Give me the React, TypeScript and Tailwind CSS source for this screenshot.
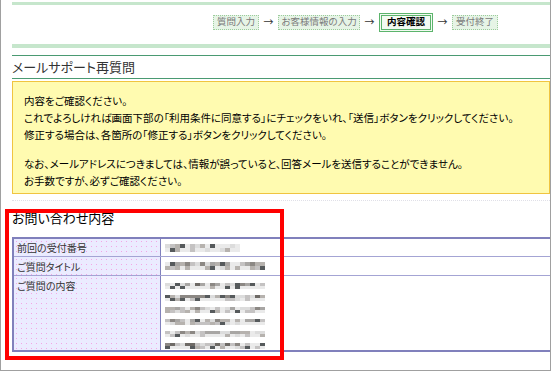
import React from "react"

const jp = "font-['Noto_Sans_CJK_JP','Noto_Sans',sans-serif] [font-feature-settings:'palt']"

const steps = [
  { label: "質問入力", current: false, w: "w-[46px]" },
  { label: "お客様情報の入力", current: false, w: "w-[82px]" },
  { label: "内容確認", current: true, w: "w-[54px]" },
  { label: "受付終了", current: false, w: "w-[46px]" },
]

const shades = [
  "bg-[#6e6a66]",
  "bg-[#8c8884]",
  "bg-[#a8a6a4]",
  "bg-[#c4c2c2]",
  "bg-[#dcdcdc]",
  "bg-[#565a5c]",
  "bg-[#b6b2ae]",
  "bg-[#eaeaea]",
]

// small pseudo random so the mosaic stays the same between renders
function pick(seed: number) {
  const x = Math.sin(seed * 12.9898) * 43758.5453
  return Math.floor((x - Math.floor(x)) * shades.length)
}

function Mosaic({ width, seed, light = false, row = 4 }: { width: number; seed: number; light?: boolean; row?: number }) {
  const cols = Math.round(width / 5)
  return (
    <div className="flex flex-col">
      {[0, 1].map((r) => (
        <div key={r} className="flex">
          {Array.from({ length: cols }).map((_, c) => {
            let i = pick(seed * 97 + r * 31 + c)
            if (light || r === 1) i = Math.min(7, i + 3)
            return <div key={c} className={`w-[5px] ${row === 3 ? "h-[3px]" : "h-[4px]"} ${shades[i]}`} />
          })}
        </div>
      ))}
    </div>
  )
}

export default function App() {
  return (
    <div className={`relative w-[551px] h-[371px] overflow-hidden bg-white border-l border-r border-b border-[#a0a0a0] text-[#222] ${jp}`}>
      <div className="pl-[11px]">
        {/* top band */}
        <div className="mt-[2px] h-[3px] bg-[#c6e6cc]" />

        {/* steps */}
        <div className="h-[39px] pb-[5px] pr-[52px] flex items-center justify-end gap-[4px]">
          {steps.map((s, i) => (
            <React.Fragment key={s.label}>
              {i > 0 && <span className="w-[11px] text-center text-[10px] text-[#333] leading-none">→</span>}
              {s.current ? (
                <div className={`${s.w} h-[19px] flex items-center justify-center border-[3px] border-double border-[#5cb46c] bg-[#f2faf2] text-[9.5px] font-bold text-black leading-none`}>
                  {s.label}
                </div>
              ) : (
                <div className={`${s.w} h-[15px] flex items-center justify-center border border-dotted border-[#9ccc9c] bg-[#e6f4e6] text-[9.5px] text-[#7a7a7a] leading-none`}>
                  {s.label}
                </div>
              )}
            </React.Fragment>
          ))}
        </div>

        {/* lower band */}
        <div className="h-[4px] bg-[#c6e6cc]" />

        {/* title */}
        <div className="mt-[7px] h-[24px] flex items-center border-t border-b border-[#4a9a72] text-[13px] text-[#333]">
          メールサポート再質問
        </div>

        {/* notice */}
        <div className="mt-[2px] h-[113px] border border-[#f0c440] bg-[#fffbb0] pl-[11px] pt-[10px] text-[10.5px] leading-[17px] text-black whitespace-nowrap">
          <p>内容をご確認ください。</p>
          <p>これでよろしければ画面下部の「利用条件に同意する」にチェックをいれ、「送信」ボタンをクリックしてください。</p>
          <p>修正する場合は、各箇所の「修正する」ボタンをクリックしてください。</p>
          <p className="mt-[12px]">なお、メールアドレスにつきましては、情報が誤っていると、回答メールを送信することができません。</p>
          <p>お手数ですが、必ずご確認ください。</p>
        </div>

        <div className="mt-[6px] border-t border-dotted border-[#e0e0e8]" />

        {/* inquiry */}
        <div className="mt-[7px] h-[20px] flex items-center text-[13px] text-black">お問い合わせ内容</div>

        <div className="mt-[9px] border-t-2 border-l-2 border-b-2 border-[#8080bc] text-[10px] text-[#333]">
          <div className="flex h-[18px] border-b border-[#a4a4d4]">
            <div className="w-[147px] pl-[3px] flex items-center border-r border-[#8080bc] bg-[#ebebff] bg-[radial-gradient(circle,#f2a6e6_0.7px,transparent_0.8px)] bg-[length:5px_5px]">
              前回の受付番号
            </div>
            <div className="flex-1 pl-[4px] flex items-center">
              <Mosaic width={76} seed={1} light />
            </div>
          </div>
          <div className="flex h-[19px] border-b border-[#a4a4d4]">
            <div className="w-[147px] pl-[3px] flex items-center border-r border-[#8080bc] bg-[#ebebff] bg-[radial-gradient(circle,#f2a6e6_0.7px,transparent_0.8px)] bg-[length:5px_5px]">
              ご質問タイトル
            </div>
            <div className="flex-1 pl-[4px] flex items-center">
              <Mosaic width={100} seed={2} />
            </div>
          </div>
          <div className="flex h-[74px]">
            <div className="w-[147px] pl-[3px] pt-[2px] border-r border-[#8080bc] bg-[#ebebff] bg-[radial-gradient(circle,#f2a6e6_0.7px,transparent_0.8px)] bg-[length:5px_5px]">
              ご質問の内容
            </div>
            <div className="flex-1 pl-[4px] pt-[7px] flex flex-col gap-[6px]">
              {[3, 4, 5, 6, 7, 8].map((s) => (
                <Mosaic key={s} width={100} seed={s} row={3} />
              ))}
            </div>
          </div>
        </div>
      </div>

      {/* red highlight */}
      <div className="absolute left-[4px] top-[209px] w-[279px] h-[151px] border-[4px] border-[#ff0000]" />
    </div>
  )
}
